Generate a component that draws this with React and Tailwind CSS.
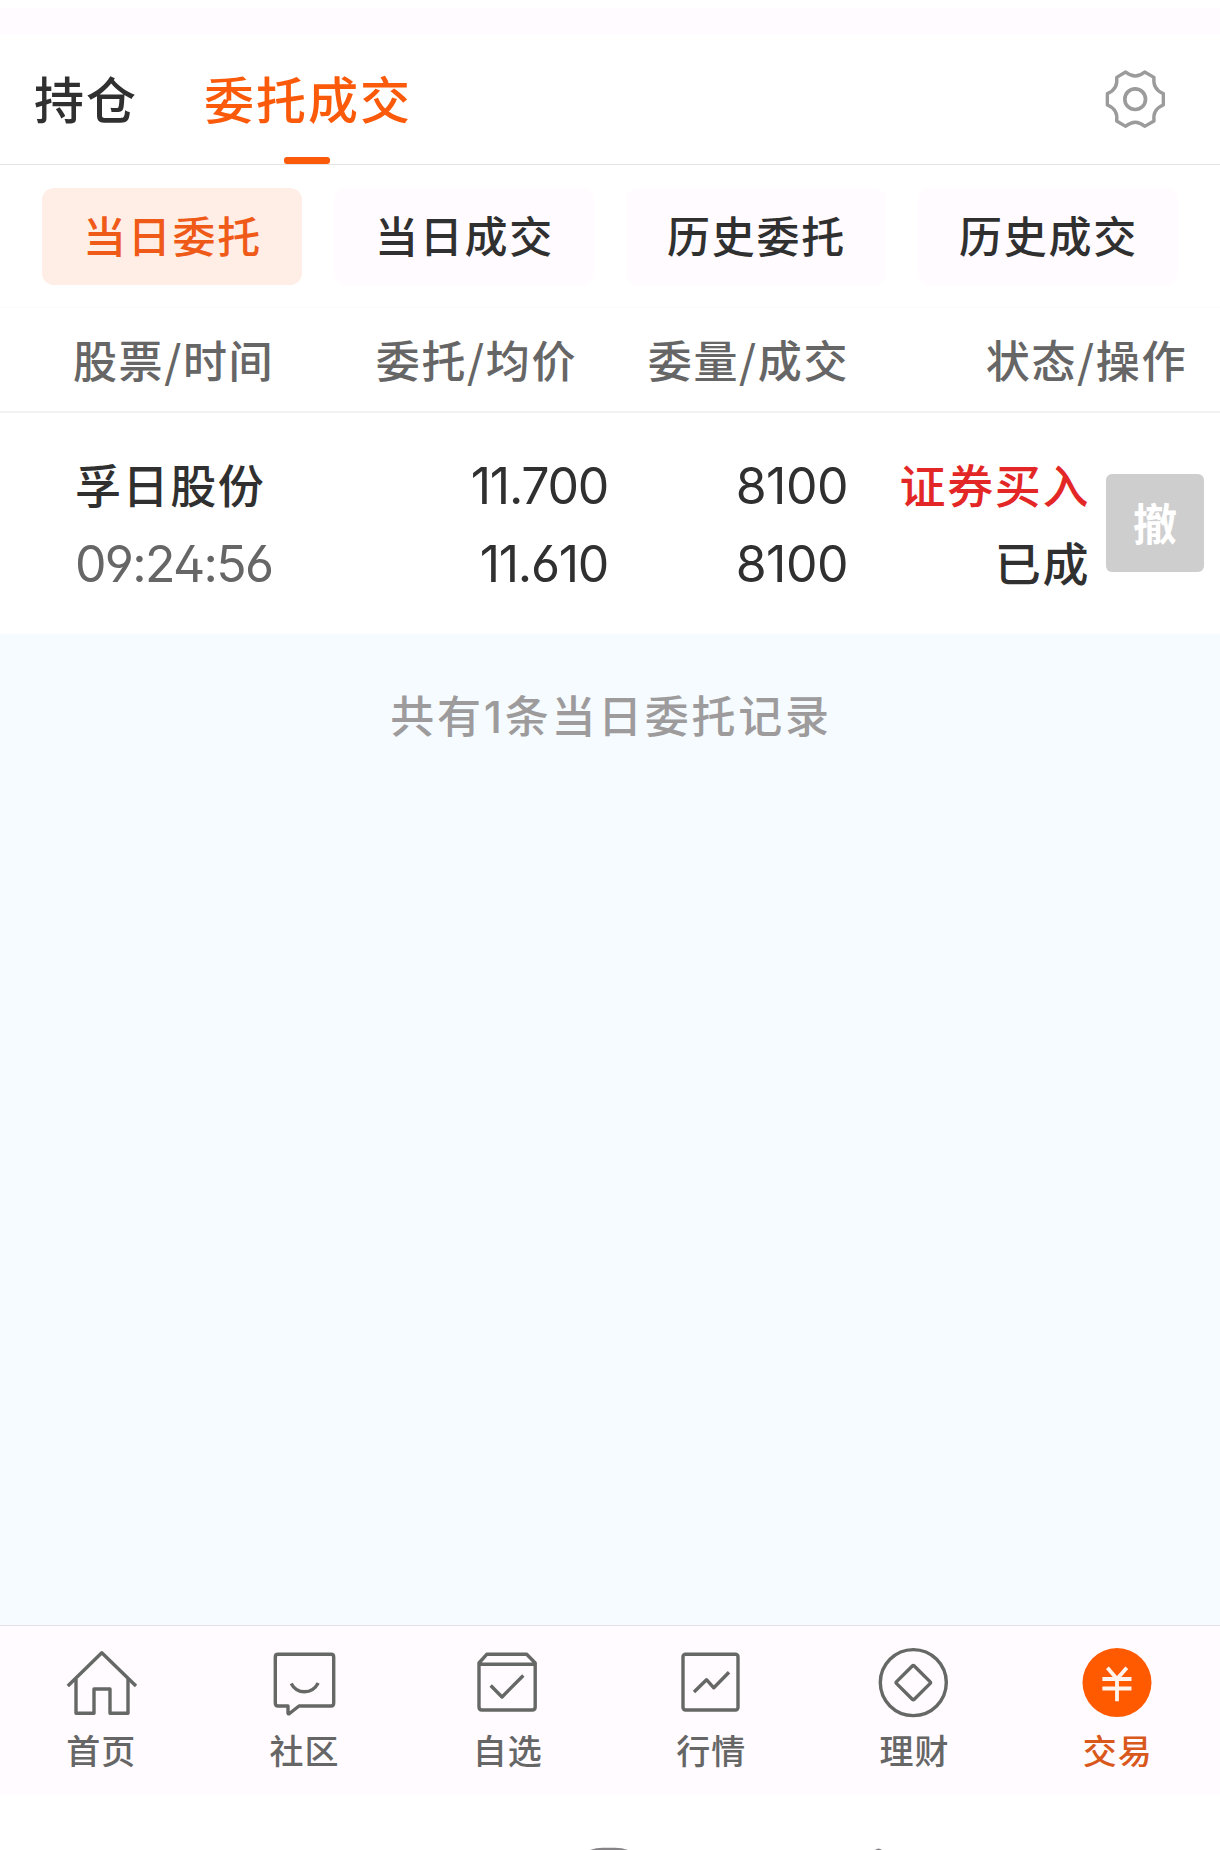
import { useState } from 'react';
import clsx from 'clsx';

const FILTERS = ['当日委托', '当日成交', '历史委托', '历史成交'];

const ORDERS = [
  { name: '孚日股份', time: '09:24:56', price: '11.700', avg: '11.610', amount: '8100', filled: '8100', side: '证券买入', status: '已成' },
];

const GearIcon = () => (
  <svg className="w-[72px] h-[72px]" viewBox="28 39 216 216" fill="none" stroke="#9b9b9b" strokeWidth="10" strokeLinejoin="round">
    <path d="M108 66 Q137 90 165 66 L193 82 Q188 118 221 131 V165 Q188 178 193 213 L165 229 Q137 204 108 229 L81 213 Q86 178 53 165 V131 Q86 118 81 82 Z" />
    <circle cx="136.5" cy="147.5" r="31" strokeWidth="11" />
  </svg>
);

const NAV = [
  {
    label: '首页',
    icon: (
      <>
        <path d="M5.8 44 L39.8 10.8 L74 44" />
        <path d="M14 37 V71.3 H32 V47 H48 V71.3 H66 V37" />
      </>
    ),
  },
  {
    label: '社区',
    icon: (
      <>
        <path d="M13 12.3 H66 Q68.7 12.3 68.7 15 V61 Q68.7 64 66 64 H34 L24.5 71.5 Q23 72.5 23 71 V64 H13 Q10.3 64 10.3 61 V15 Q10.3 12.3 13 12.3 Z" />
        <path d="M26.2 41.5 Q30.5 49.8 39.5 49.8 Q48.5 49.8 53.2 41" />
      </>
    ),
  },
  {
    label: '自选',
    icon: (
      <>
        <path d="M11 22.3 H67.2 V65 Q67.2 68 64.2 68 H14 Q11 68 11 65 V21 L18.7 12.3 H58.7 L67.2 21 V24" />
        <path d="M22.7 43.5 L34 55 L55.3 33.5" />
      </>
    ),
  },
  {
    label: '行情',
    icon: (
      <>
        <rect x="11" y="12.3" width="55" height="55.7" rx="2.5" />
        <path d="M22 50 L34.5 37.7 L41.8 45.8 L57 30.3" />
      </>
    ),
  },
  {
    label: '理财',
    icon: (
      <>
        <circle cx="38.3" cy="40.6" r="33" />
        <path d="M37.3 24 Q38.3 23 39.3 24 L55 39.6 Q56 40.6 55 41.6 L39.3 57.3 Q38.3 58.3 37.3 57.3 L21.6 41.6 Q20.6 40.6 21.6 39.6 Z" />
      </>
    ),
  },
  {
    label: '交易',
    icon: (
      <>
        <circle cx="39" cy="40.6" r="34.5" fill="#ff5a00" stroke="none" />
        <path stroke="#fff4ee" strokeWidth="3.8" d="M29.4 25.8 L39 37 L48.8 25.8 M24.4 37 H53.5 M24.4 46.5 H53.5 M39 37 V59.3" />
      </>
    ),
  },
];

const App = () => {
  const [filter, setFilter] = useState('当日委托');
  const [tab, setTab] = useState('交易');

  return (
    <div className="w-[1220px] h-[1850px] flex flex-col overflow-hidden bg-white text-[#303030] font-medium font-['Noto_Sans_CJK_SC',sans-serif]">
      <div className="h-[26px] mt-2 bg-[#fffbff] shrink-0" />

      {/* 顶部标签 */}
      <header className="h-[131px] shrink-0 flex items-start border-b border-[#e4e4e4] pl-[34px] pr-[49px] text-[50px] leading-[126px] tracking-[2px]">
        <button className="w-[104px] whitespace-nowrap text-left">持仓</button>
        <button className="relative ml-[66px] w-[208px] whitespace-nowrap text-left text-[#fa5a0a]">
          委托成交
          <span className="absolute left-[80px] top-[123px] w-[46px] h-[7px] rounded-[3px] bg-[#fa5a0a]" />
        </button>
        <button className="ml-auto mt-[29px]"><GearIcon /></button>
      </header>

      {/* 查询类型 */}
      <div className="h-[143px] shrink-0 grid grid-cols-4 gap-8 px-[42px] pt-[23px] pb-[22px] border-b border-[#fafcfd]">
        {FILTERS.map(f => (
          <button
            key={f}
            onClick={() => setFilter(f)}
            className={clsx(
              'rounded-xl text-[43px] leading-[93px] pb-1 pl-px tracking-[1.8px]',
              filter === f ? 'bg-[#ffeee6] text-[#f05a18]' : 'bg-[#fffbff]'
            )}
          >
            {f}
          </button>
        ))}
      </div>

      {/* 表头 */}
      <div className="h-[105px] shrink-0 flex border-b-2 border-[#f3f3f3] text-[44px] leading-[102px] tracking-[1.6px] text-[#666] whitespace-nowrap">
        <span className="w-[301px] pl-[73px]">股票/时间</span>
        <span className="w-[276px] text-right">委托/均价</span>
        <span className="w-[272px] text-right">委量/成交</span>
        <span className="w-[338px] text-right">状态/操作</span>
      </div>

      {ORDERS.map(o => (
        <div key={o.time} className="h-[221px] shrink-0 flex items-start pt-[34px] text-[46px] leading-[78px] whitespace-nowrap">
          <div className="w-[301px] pl-[75px]">
            <p className="relative -top-[3px] tracking-[1.6px]">{o.name}</p>
            <p className="font-['Inter'] font-normal text-[50px] tracking-[-1.7px] text-[#666] [font-feature-settings:'ss01']">{o.time}</p>
          </div>
          <div className="w-[307px] text-right font-['Inter'] font-normal text-[50px] tracking-[-1.3px] [font-feature-settings:'ss01']">
            <p>{o.price}</p>
            <p>{o.avg}</p>
          </div>
          <div className="w-[240px] text-right font-['Inter'] font-normal text-[50px] tracking-[-0.5px]">
            <p>{o.amount}</p>
            <p>{o.filled}</p>
          </div>
          <div className="relative -top-[3px] w-[242px] text-right tracking-[1.6px]">
            <p className="text-[#e32626]">{o.side}</p>
            <p>{o.status}</p>
          </div>
          <button className="ml-4 mt-[27px] w-[98px] h-[98px] rounded-md bg-[#cecece] text-white text-[44px] leading-[94px] pb-0.5 font-bold">撤</button>
        </div>
      ))}

      <main className="flex-1 bg-[#f6fbff] pt-10 pl-0.5 text-center text-[44px] leading-[80px] tracking-[2.7px] text-[#9e9b9d]">
        共有<span className="font-['Inter']">{ORDERS.length}</span>条{filter}记录
      </main>

      {/* 底部导航 */}
      <nav className="h-[170px] shrink-0 grid grid-cols-6 border-t border-[#e6e1e6] bg-[#fffbff]">
        {NAV.map(n => (
          <button
            key={n.label}
            onClick={() => setTab(n.label)}
            className={clsx('flex flex-col items-center pt-4', tab === n.label ? 'text-[#d9581c]' : 'text-[#666]')}
          >
            <svg className="w-20 h-20" viewBox="0 0 80 80" fill="none" stroke="#666866" strokeWidth="3.4" strokeLinejoin="round">
              {n.icon}
            </svg>
            <span className="pr-px text-[34px] leading-[56px] tracking-[1px]">{n.label}</span>
          </button>
        ))}
      </nav>

      {/* 系统导航键 */}
      <div className="h-[55px] shrink-0 flex items-end bg-white">
        <svg className="w-full h-3" viewBox="0 0 1220 12" fill="#858385">
          <path d="M590 12 Q596 9.8 603 9.8 H615 Q622 9.8 628 12 Z" />
          <path d="M875 12 Q878.5 9 882 12 Z" />
        </svg>
      </div>
    </div>
  );
};

export default App;
